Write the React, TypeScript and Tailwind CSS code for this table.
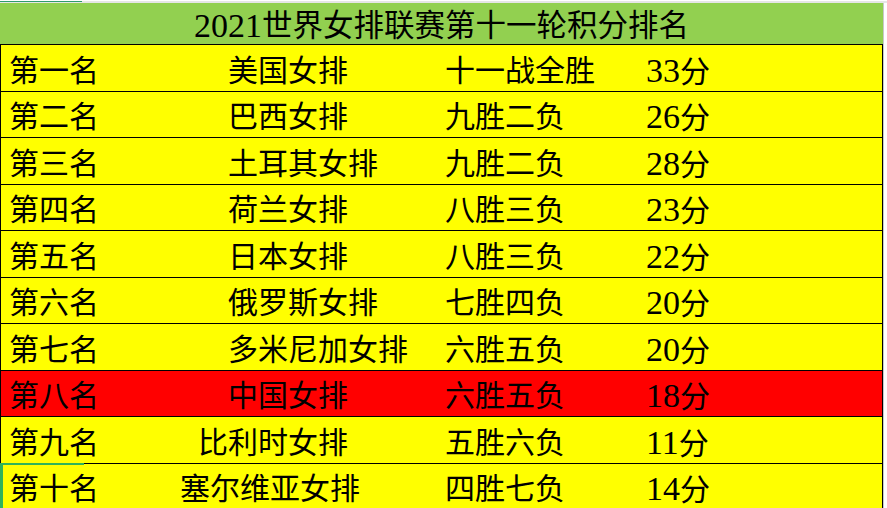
const rows = [
  { rank: '第一名', team: '美国女排', teamPad: 'pl-[58px]', record: '十一战全胜', pts: '33', bg: 'bg-[#ffff00]' },
  { rank: '第二名', team: '巴西女排', teamPad: 'pl-[58px]', record: '九胜二负', pts: '26', bg: 'bg-[#ffff00]' },
  { rank: '第三名', team: '土耳其女排', teamPad: 'pl-[58px]', record: '九胜二负', pts: '28', bg: 'bg-[#ffff00]' },
  { rank: '第四名', team: '荷兰女排', teamPad: 'pl-[58px]', record: '八胜三负', pts: '23', bg: 'bg-[#ffff00]' },
  { rank: '第五名', team: '日本女排', teamPad: 'pl-[58px]', record: '八胜三负', pts: '22', bg: 'bg-[#ffff00]' },
  { rank: '第六名', team: '俄罗斯女排', teamPad: 'pl-[58px]', record: '七胜四负', pts: '20', bg: 'bg-[#ffff00]' },
  { rank: '第七名', team: '多米尼加女排', teamPad: 'pl-[58px]', record: '六胜五负', pts: '20', bg: 'bg-[#ffff00]' },
  { rank: '第八名', team: '中国女排', teamPad: 'pl-[58px]', record: '六胜五负', pts: '18', bg: 'bg-[#ff0000]' },
  { rank: '第九名', team: '比利时女排', teamPad: 'pl-[28px]', record: '五胜六负', pts: '11', bg: 'bg-[#ffff00]' },
  { rank: '第十名', team: '塞尔维亚女排', teamPad: 'pl-[10px]', record: '四胜七负', pts: '14', bg: 'bg-[#ffff00]' },
];

export default function App() {
  return (
    <div className="w-[887px] h-[508px] overflow-hidden bg-white text-black font-['Liberation_Serif','Noto_Sans_CJK_SC',serif]">
      {/* sheet header remnant */}
      <div className="h-[2px] bg-[#e6e6e6]">
        <div className="mt-[1px] h-[1px] w-[82px] bg-[#2e9b6e]" />
      </div>

      <div className="w-[884px] border-r border-r-[#c8c8c8]">
        <div className="h-[41px] bg-[#92d050] flex items-center justify-center pt-[5px] text-[30.5px] leading-none">
          <span className="text-[34px]">2021</span>世界女排联赛第十一轮积分排名
        </div>

        <div className="border-l border-r border-black">
          {rows.map((r, i) => (
            <div
              key={r.rank}
              className={`relative h-[46.5px] flex items-center pt-[6px] text-[30px] leading-none border-t border-black ${r.bg}`}
            >
              {i === rows.length - 1 && (
                <div className="absolute -left-px -top-px w-[84px] h-[50px] border-t-2 border-l-[3px] border-[#2fb35a]" />
              )}
              <div className="w-[169px] pl-[8px] whitespace-nowrap">{r.rank}</div>
              <div className={`w-[275px] whitespace-nowrap ${r.teamPad}`}>{r.team}</div>
              <div className="w-[201px] whitespace-nowrap">{r.record}</div>
              <div className="whitespace-nowrap">
                <span className="text-[34px]">{r.pts}</span>分
              </div>
            </div>
          ))}
        </div>
      </div>
    </div>
  );
}
